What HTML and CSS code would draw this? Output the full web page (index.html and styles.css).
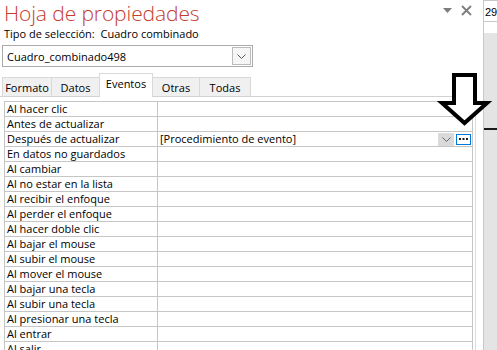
FILE: index.html
```html
<!DOCTYPE html>
<html lang="es">
    <head>
        <meta charset="UTF-8">
        <title>Hoja de propiedades</title>
        <link rel="stylesheet" href="styles.css">
    </head>
    <body>
        <div class="app">
            <div class="sheet">
                <div class="head">
                    <h1 class="title">Hoja de propiedades</h1>
                    <div class="win-tools">
                        <svg class="tool-menu" width="9" height="6" viewBox="0 0 9 6"><path d="M0 0 L9 0 L4.5 5 Z" fill="#7d7d7d"/></svg>
                        <svg class="tool-close" width="11" height="11" viewBox="0 0 11 11"><path d="M1 1 L10 10 M10 1 L1 10" stroke="#7d7d7d" stroke-width="1.8"/></svg>
                    </div>
                </div>
                <div class="sel-type">Tipo de selección:&nbsp; Cuadro combinado</div>
                <div class="combo">
                    <span class="combo-text">Cuadro_combinado498</span>
                    <span class="combo-btn">
                        <svg width="9" height="5" viewBox="0 0 9 5"><path d="M0.5 0.5 L4.5 4.5 L8.5 0.5" fill="none" stroke="#555" stroke-width="1"/></svg>
                    </span>
                </div>
                <div class="tabs">
                    <div class="tab t-formato">Formato</div>
                    <div class="tab t-datos">Datos</div>
                    <div class="tab t-eventos active">Eventos</div>
                    <div class="tab t-otras">Otras</div>
                    <div class="tab t-todas">Todas</div>
                </div>
                <div class="grid-area">
                    <table class="props">
                        <tr><td class="name">Al hacer clic</td><td></td></tr>
                        <tr><td class="name">Antes de actualizar</td><td></td></tr>
                        <tr>
                            <td class="name">Después de actualizar</td>
                            <td class="value">
                                <div class="value-row">
                                    <span class="value-text">[Procedimiento de evento]</span>
                                    <span class="drop-btn">
                                        <svg width="9" height="5" viewBox="0 0 9 5"><path d="M0.5 0.5 L4.5 4.5 L8.5 0.5" fill="none" stroke="#666" stroke-width="1"/></svg>
                                    </span>
                                    <span class="build-btn">
                                        <svg width="9" height="2" viewBox="0 0 9 2"><rect x="0" y="0" width="2" height="2" fill="#1a1a1a"/><rect x="3.5" y="0" width="2" height="2" fill="#1a1a1a"/><rect x="7" y="0" width="2" height="2" fill="#1a1a1a"/></svg>
                                    </span>
                                </div>
                            </td>
                        </tr>
                        <tr><td class="name">En datos no guardados</td><td></td></tr>
                        <tr><td class="name">Al cambiar</td><td></td></tr>
                        <tr><td class="name">Al no estar en la lista</td><td></td></tr>
                        <tr><td class="name">Al recibir el enfoque</td><td></td></tr>
                        <tr><td class="name">Al perder el enfoque</td><td></td></tr>
                        <tr><td class="name">Al hacer doble clic</td><td></td></tr>
                        <tr><td class="name">Al bajar el mouse</td><td></td></tr>
                        <tr><td class="name">Al subir el mouse</td><td></td></tr>
                        <tr><td class="name">Al mover el mouse</td><td></td></tr>
                        <tr><td class="name">Al bajar una tecla</td><td></td></tr>
                        <tr><td class="name">Al subir una tecla</td><td></td></tr>
                        <tr><td class="name">Al presionar una tecla</td><td></td></tr>
                        <tr><td class="name">Al entrar</td><td></td></tr>
                        <tr><td class="name">Al salir</td><td></td></tr>
                    </table>
                    <div class="scroll-edge"></div>
                </div>
            </div>
            <div class="strip">
                <div class="strip-cell">29</div>
                <div class="strip-gap"></div>
                <div class="strip-row"></div>
            </div>

            <!-- flecha de señalización -->
            <svg class="callout" width="60" height="62" viewBox="436 70 60 62">
                <path d="M454 75 L475 75 L475 103 L487 103 L464.5 123 L442 103 L454 103 Z" fill="#fff" stroke="#000" stroke-width="4" stroke-linejoin="miter"/>
            </svg>
        </div>
    </body>
</html>
```

FILE: styles.css
```css
body {
    margin: 0;
    padding: 0;
    background: #fff;
    font-family: "Open Sans", "Noto Sans", Arial, sans-serif;
    font-size: 11px;
    color: #000;
}
.app {
    position: relative;
    display: flex;
    width: 497px;
    height: 350px;
    overflow: hidden;
}
.sheet {
    width: 483px;
    flex-shrink: 0;
    border-right: 1px solid #c8c8c8;
}
.head {
    display: flex;
    justify-content: space-between;
    align-items: flex-start;
}
.title {
    margin: 0;
    padding-left: 4px;
    font-size: 21px;
    font-weight: 300;
    line-height: 26px;
    color: #c43b30;
    letter-spacing: -0.1px;
}
.win-tools {
    display: flex;
    align-items: center;
    gap: 9px;
    margin-top: 5px;
    margin-right: 11px;
}
.tool-menu {
    margin-top: 1px;
}
.sel-type {
    padding-left: 4px;
    line-height: 16px;
}
.combo {
    display: flex;
    align-items: center;
    justify-content: space-between;
    margin: 3px 0 0 2px;
    width: 249px;
    height: 20px;
    border: 1px solid #ababab;
}
.combo-text {
    padding-left: 4px;
}
.combo-btn {
    display: flex;
    align-items: center;
    justify-content: center;
    width: 17px;
    height: 16px;
    margin-right: 1px;
    border: 1px solid #bcbcbc;
    background: #f6f6f6;
}
.tabs {
    display: flex;
    align-items: flex-end;
    margin-top: 6px;
    padding-left: 2px;
    height: 23px;
    width: 470px;
    border-bottom: 1px solid #d2d2d2;
}
.tab {
    height: 19px;
    line-height: 19px;
    text-align: center;
    background: #f0f0f0;
    border: 1px solid #d9d9d9;
    border-bottom: none;
    border-left: none;
    box-sizing: border-box;
}
.t-formato { width: 50px; border-left: 1px solid #d9d9d9; }
.t-datos { width: 48px; }
.t-eventos { width: 54px; }
.t-otras { width: 47px; }
.t-todas { width: 51px; }
.tab.active {
    height: 24px;
    line-height: 19px;
    margin-bottom: -1px;
    background: #fff;
    border-left: 1px solid #d9d9d9;
    margin-left: -1px;
}
.grid-area {
    display: flex;
    margin-top: 4px;
    padding-left: 4px;
}
.props {
    border-collapse: collapse;
    width: 469px;
    table-layout: fixed;
}
.props td {
    height: 14px;
    padding: 0 0 0 2px;
    border: 1px solid #c6c6c6;
    line-height: 14px;
    white-space: nowrap;
    overflow: hidden;
}
.props td.name {
    width: 150px;
}
.props td.value {
    padding-left: 2px;
}
.value-row {
    display: flex;
    align-items: center;
    height: 14px;
}
.value-text {
    flex: 1;
}
.drop-btn {
    display: flex;
    align-items: center;
    justify-content: center;
    width: 16px;
    height: 13px;
    background: #dadada;
    margin-top: 1px;
}
.build-btn {
    display: flex;
    align-items: center;
    justify-content: center;
    width: 13px;
    height: 9px;
    margin: 0 1px 0 2px;
    border: 1px solid #0078d7;
    background: #fff;
}
.scroll-edge {
    width: 1px;
    margin-left: 2px;
    background: #dcdcdc;
    margin-top: -5px;
}
.strip {
    flex: 1;
    background: #e4e4e4;
    display: flex;
    flex-direction: column;
}
.strip-cell {
    height: 20px;
    background: #fff;
    border-top: 1px solid #c8c8c8;
    border-bottom: 1px solid #c8c8c8;
    font-family: "Liberation Sans", Arial, sans-serif;
    font-size: 11px;
    line-height: 22px;
    padding-left: 1px;
}
.strip-gap {
    height: 11px;
    background: #fff;
}
.strip-row {
    height: 95px;
    border-bottom: 2px solid #1a1a1a;
}
.callout {
    position: absolute;
    left: 436px;
    top: 70px;
}
```
